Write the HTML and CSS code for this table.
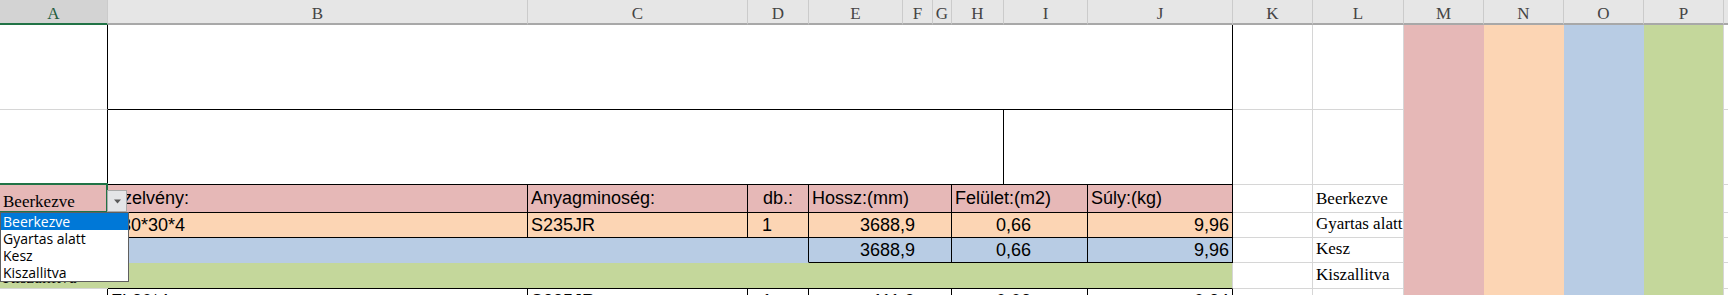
FILE: index.html
```html
<!DOCTYPE html>
<html lang="hu">
<head>
<meta charset="utf-8">
<title>Munkalap</title>
<link rel="stylesheet" href="styles.css">
</head>
<body>
<div class="sheet">
  <!-- column headers -->
  <div class="h sel">A</div><div class="h">B</div><div class="h">C</div><div class="h">D</div><div class="h">E</div><div class="h">F</div><div class="h">G</div><div class="h">H</div><div class="h">I</div><div class="h">J</div><div class="h">K</div><div class="h">L</div><div class="h">M</div><div class="h">N</div><div class="h">O</div><div class="h">P</div><div class="h"></div>

  <!-- row 1 -->
  <div class="c brk"></div>
  <div class="c s9 brk bbk"></div>
  <div class="c"></div>
  <div class="c"></div>
  <div class="c col pink"></div>
  <div class="c col peach"></div>
  <div class="c col blue"></div>
  <div class="c col green last"></div>
  <div class="c"></div>

  <!-- row 2 -->
  <div class="c brk"></div>
  <div class="c s7 brk bbk"></div>
  <div class="c s2 brk bbk"></div>
  <div class="c"></div>
  <div class="c"></div>
  <div class="c"></div>

  <!-- row 3 -->
  <div class="c pink serif a3 nob">
    <span>Beerkezve</span>
    <div class="selbox"></div>
    <div class="ddbtn"><svg width="9" height="6" viewBox="0 0 9 6"><path d="M1 1.5h7l-3.5 4z" fill="#5a5a5a"/></svg></div>
    <div class="ddlist">
      <div class="dd-item on">Beerkezve</div>
      <div class="dd-item">Gyartas alatt</div>
      <div class="dd-item">Kesz</div>
      <div class="dd-item">Kiszallitva</div>
    </div>
  </div>
  <div class="c pink brk bbk">Szelvény:</div>
  <div class="c pink brk bbk">Anyagminoség:</div>
  <div class="c pink brk bbk ctr">db.:</div>
  <div class="c pink brk bbk s3">Hossz:(mm)</div>
  <div class="c pink brk bbk s2">Felület:(m2)</div>
  <div class="c pink brk bbk">Súly:(kg)</div>
  <div class="c"></div>
  <div class="c serif list">Beerkezve</div>
  <div class="c"></div>

  <!-- row 4 -->
  <div class="c peach serif nob">Gyartas alatt</div>
  <div class="c peach brk bbk">L30*30*4</div>
  <div class="c peach brk bbk">S235JR</div>
  <div class="c peach brk bbk qty">1</div>
  <div class="c peach brk bbk s3 len">3688,9</div>
  <div class="c peach brk bbk s2 area">0,66</div>
  <div class="c peach brk bbk r">9,96</div>
  <div class="c"></div>
  <div class="c serif list">Gyartas alatt</div>
  <div class="c"></div>

  <!-- row 5 -->
  <div class="c blue serif nob">Kesz</div>
  <div class="c blue s3 brk nobb"></div>
  <div class="c blue brk bbk s3 len">3688,9</div>
  <div class="c blue brk bbk s2 area">0,66</div>
  <div class="c blue brk bbk r">9,96</div>
  <div class="c"></div>
  <div class="c serif list">Kesz</div>
  <div class="c"></div>

  <!-- row 6 -->
  <div class="c green serif nobr">Kiszallitva</div>
  <div class="c green s9 bbk"></div>
  <div class="c"></div>
  <div class="c serif list">Kiszallitva</div>
  <div class="c"></div>

  <!-- row 7 -->
  <div class="c brk"></div>
  <div class="c brk">FL30*4</div>
  <div class="c brk">S235JR</div>
  <div class="c brk qty">1</div>
  <div class="c brk s3 len">111,9</div>
  <div class="c brk s2 area">0,02</div>
  <div class="c brk r">0,24</div>
  <div class="c"></div>
  <div class="c"></div>
  <div class="c"></div>
</div>
</body>
</html>
```

FILE: styles.css
```css
html, body {
  margin: 0;
  padding: 0;
  background: #ffffff;
  overflow: hidden;
}

body {
  font-family: "Liberation Sans", Arial, sans-serif;
  color: #000;
}

.sheet {
  display: grid;
  width: 1728px;
  grid-template-columns: 108px 420px 220px 61px 94px 30px 19px 52px 84px 145px 80px 91px 80px 80px 80px 80px 1fr;
  grid-template-rows: 25px 85px 75px 28px 25px 25px 26px 26px;
}

/* column header row */
.h {
  box-sizing: border-box;
  background: #e6e6e6;
  border-right: 1px solid #cbcbcb;
  border-bottom: 2px solid #a8a8a8;
  font-family: "Liberation Serif", "Times New Roman", serif;
  font-size: 17px;
  line-height: 19px;
  padding-top: 4px;
  text-align: center;
  color: #444;
}

.h.sel {
  background: #d3d3d3;
  border-bottom-color: #217346;
  color: #235c3c;
}

/* cells */
.c {
  box-sizing: border-box;
  border-right: 1px solid #d6d6d6;
  border-bottom: 1px solid #d6d6d6;
  display: flex;
  align-items: center;
  padding: 0 3px;
  font-size: 18px;
  white-space: nowrap;
  min-width: 0;
}

.s2 { grid-column: span 2; }
.s3 { grid-column: span 3; }
.s7 { grid-column: span 7; }
.s9 { grid-column: span 9; }
.col { grid-row: span 7; border-bottom-color: transparent; }

.brk { border-right-color: #000; }
.bbk { border-bottom-color: #000; }
.nob { border-right-color: transparent; border-bottom-color: transparent; }
.nobr { border-right-color: transparent; }
.nobb { border-bottom-color: transparent; }

.pink { background: #e6b8b7; }
.peach { background: #fcd5b4; }
.blue { background: #b8cce4; }
.green { background: #c4d79b; }

.col.pink, .col.peach, .col.blue { border-right-color: transparent; }
.col.last { border-right-color: #d6d6d6; }

.ctr { justify-content: center; }
.r { justify-content: flex-end; }
.qty { padding-left: 14px; }
.len { justify-content: flex-end; padding-right: 36px; }
.area { justify-content: center; padding-right: 15px; }

.serif {
  font-family: "Liberation Serif", "Times New Roman", serif;
  font-size: 17px;
  align-items: flex-end;
  padding-bottom: 0;
}

.serif.list { padding-bottom: 3px; }

.a3 {
  position: relative;
  font-size: 17px;
}

/* selection outline around active cell */
.selbox {
  position: absolute;
  top: -2px;
  left: -2px;
  right: -1px;
  bottom: -1px;
  border: 2px solid #217346;
  pointer-events: none;
}

/* data-validation dropdown button */
.ddbtn {
  position: absolute;
  left: 100%;
  top: 5px;
  width: 20px;
  height: 22px;
  box-sizing: border-box;
  background: #e4e5e7;
  border: 1px solid #a9a9a9;
  display: flex;
  align-items: center;
  justify-content: center;
  z-index: 6;
}

.ddbtn svg { display: block; }

/* dropdown list */
.ddlist {
  position: absolute;
  left: 0;
  top: 27px;
  width: 129px;
  box-sizing: border-box;
  background: #fff;
  border: 1px solid #5f5f5f;
  z-index: 5;
  font-family: "Open Sans", "Noto Sans", sans-serif;
  font-size: 14px;
  color: #000;
}

.dd-item {
  height: 17px;
  line-height: 17px;
  padding-left: 2px;
  white-space: nowrap;
}

.dd-item.on {
  background: #0078d7;
  color: #fff;
}
```
